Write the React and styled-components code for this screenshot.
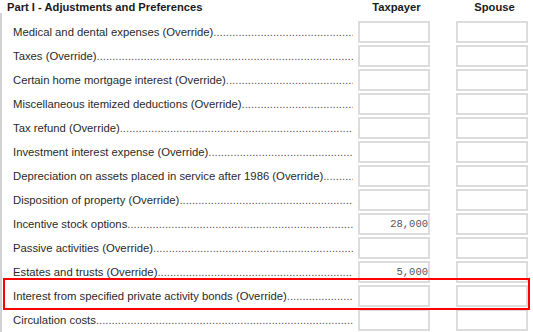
import React from "react";
import styled, { createGlobalStyle } from "styled-components";

const GlobalStyle = createGlobalStyle`
  html, body { margin: 0; padding: 0; background: #fff; }
  body { font-family: "Liberation Sans", Arial, sans-serif; }
`;

const Page = styled.div`
  position: relative;
  width: 533px;
  height: 332px;
  overflow: hidden;
  background: #fff;
`;

const Header = styled.div`
  display: flex;
  height: 13px;
  font-size: 11.2px;
  line-height: 14px;
  font-weight: bold;
  color: #1a1a1a;
`;

const Title = styled.div`
  width: 358px;
  padding-left: 7px;
  box-sizing: border-box;
`;

const ColHead = styled.div`
  width: 72px;
  margin-left: ${(p) => p.$gap || 0}px;
  padding-left: 5px;
  text-align: center;
  box-sizing: border-box;
`;

const Body = styled.div`
  border-left: 2px solid #d2d2d2;
  padding-top: 7px;
  padding-left: 11px;
`;

const Row = styled.div`
  display: flex;
  align-items: center;
  height: 24px;
`;

const Label = styled.div`
  width: 340px;
  white-space: nowrap;
  overflow: hidden;
  font-size: 11.3px;
  line-height: 14px;
  color: #2a2a2a;
`;

const Dots = styled.span`
  color: #555;
`;

const Box = styled.div`
  width: 72px;
  height: 22px;
  margin-left: ${(p) => p.$gap}px;
  box-sizing: border-box;
  border: 2px solid #dcdcdc;
  display: flex;
  align-items: center;
  justify-content: flex-end;
  font-family: "Liberation Mono", "Courier New", monospace;
  font-size: 10.5px;
  color: #555;
`;

const Highlight = styled.div`
  position: absolute;
  left: 3px;
  top: 278px;
  width: 527px;
  height: 32px;
  box-sizing: border-box;
  border: 2px solid #ff0000;
  pointer-events: none;
`;

const rows = [
  ["Medical and dental expenses (Override)", ""],
  ["Taxes (Override)", ""],
  ["Certain home mortgage interest (Override)", ""],
  ["Miscellaneous itemized deductions (Override)", ""],
  ["Tax refund (Override)", ""],
  ["Investment interest expense (Override)", ""],
  ["Depreciation on assets placed in service after 1986 (Override)", ""],
  ["Disposition of property (Override)", ""],
  ["Incentive stock options", "28,000"],
  ["Passive activities (Override)", ""],
  ["Estates and trusts (Override)", "5,000"],
  ["Interest from specified private activity bonds (Override)", ""],
  ["Circulation costs", ""],
];

const leader = ".".repeat(150);

export default function App() {
  return (
    <>
      <GlobalStyle />
      <Page>
        <Header>
          <Title>Part I - Adjustments and Preferences</Title>
          <ColHead>Taxpayer</ColHead>
          <ColHead $gap={26}>Spouse</ColHead>
        </Header>
        <Body>
          {rows.map(([label, value]) => (
            <Row key={label}>
              <Label>
                {label}
                <Dots>{leader}</Dots>
              </Label>
              <Box $gap={5}>{value}</Box>
              <Box $gap={26} />
            </Row>
          ))}
        </Body>
        <Highlight />
      </Page>
    </>
  );
}
